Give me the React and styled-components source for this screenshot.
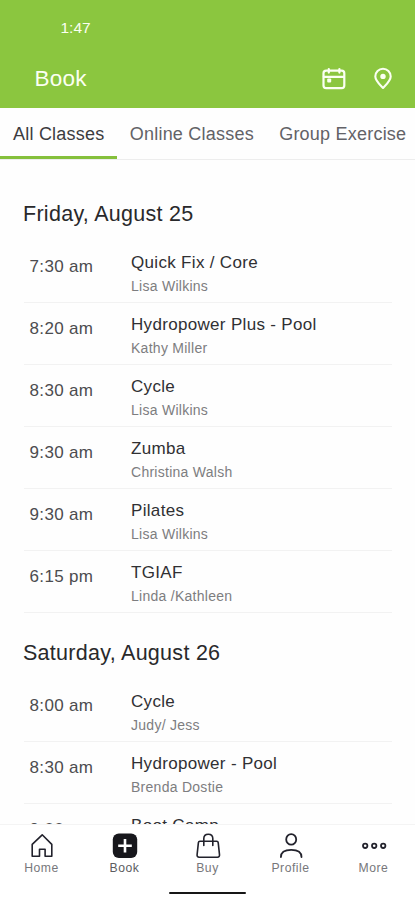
import React from 'react';
import styled, { createGlobalStyle } from 'styled-components';

const days = [
	{
		date: 'Friday, August 25',
		classes: [
			{ time: '7:30 am', title: 'Quick Fix / Core', coach: 'Lisa Wilkins' },
			{ time: '8:20 am', title: 'Hydropower Plus - Pool', coach: 'Kathy Miller' },
			{ time: '8:30 am', title: 'Cycle', coach: 'Lisa Wilkins' },
			{ time: '9:30 am', title: 'Zumba', coach: 'Christina Walsh' },
			{ time: '9:30 am', title: 'Pilates', coach: 'Lisa Wilkins' },
			{ time: '6:15 pm', title: 'TGIAF', coach: 'Linda /Kathleen' },
		],
	},
	{
		date: 'Saturday, August 26',
		classes: [
			{ time: '8:00 am', title: 'Cycle', coach: 'Judy/ Jess' },
			{ time: '8:30 am', title: 'Hydropower - Pool', coach: 'Brenda Dostie' },
			{ time: '9:00 am', title: 'Boot Camp', coach: '' },
		],
	},
];

const tabs = ['All Classes', 'Online Classes', 'Group Exercise'];

const CalendarIcon = () => (
	<svg width="24" height="24" viewBox="0 0 24 24" fill="none" stroke="currentColor" strokeWidth="2.2" strokeLinecap="round">
		<rect x="1.5" y="3.6" width="20.8" height="17.6" rx="2.6" />
		<path d="M1.8 9.8H22M6.8 2V5.6M17.4 2V5.6" />
		<rect x="5.2" y="11.6" width="4" height="4" rx="1" fill="currentColor" stroke="none" />
	</svg>
);

const PinIcon = () => (
	<svg width="20" height="24" viewBox="0 0 20 24" fill="none" stroke="currentColor" strokeWidth="2.1" strokeLinejoin="round">
		<path d="M10 21C7.4 18.2 2.3 13.6 2.3 9.4a7.7 7.7 0 0 1 15.4 0c0 4.2-5.1 8.800-7.700 11.600Z" />
		<circle cx="10" cy="9.4" r="2.7" fill="currentColor" stroke="none" />
	</svg>
);

const HomeIcon = () => (
	<svg width="28" height="28" viewBox="0 0 28 28" fill="none" stroke="currentColor" strokeWidth="1.6" strokeLinejoin="round">
		<path d="M4.2 12.4 14.2 2.8l9.6 9.6v11.8h-6.7v-7h-5.6v7H4.2Z" />
	</svg>
);

const BookIcon = () => (
	<svg width="28" height="28" viewBox="0 0 28 28">
		<rect x="1.8" y="1.6" width="24.4" height="24.4" rx="6" fill="#17171c" />
		<path d="M14 7V20.600M7.200 13.800h13.600" stroke="#fff" strokeWidth="2.6" />
	</svg>
);

const BagIcon = () => (
	<svg width="28" height="28" viewBox="0 0 28 28" fill="none" stroke="currentColor" strokeWidth="1.6" strokeLinecap="round" strokeLinejoin="round">
		<path d="M5.9 9.2h16.800c.9 0 1.400.5 1.500 1.400l1.300 12c.2 1.600-.6 2.600-2 2.600h-18.400c-1.400 0-2.200-1-2-2.600l1.300-12c.1-.9.6-1.400 1.500-1.400Z" />
		<path d="M9.8 13.4V6.600c0-2.600 1.800-4.400 4.500-4.400s4.500 1.800 4.500 4.400v6.800" />
	</svg>
);

const ProfileIcon = () => (
	<svg width="28" height="28" viewBox="0 0 28 28" fill="none" stroke="currentColor" strokeWidth="1.8" strokeLinecap="round">
		<ellipse cx="14.2" cy="7.4" rx="5" ry="5.3" />
		<path d="M3.9 25c0-4.400 3.600-7.200 10.300-7.200s10.300 2.800 10.300 7.200" />
	</svg>
);

const MoreIcon = () => (
	<svg width="28" height="28" viewBox="0 0 28 28" fill="none" stroke="currentColor" strokeWidth="1.8">
		<circle cx="5.200" cy="13.800" r="2.200" />
		<circle cx="14.200" cy="13.800" r="2.200" />
		<circle cx="23.200" cy="13.800" r="2.200" />
	</svg>
);

const navItems = [
	{ label: 'Home', icon: HomeIcon },
	{ label: 'Book', icon: BookIcon },
	{ label: 'Buy', icon: BagIcon },
	{ label: 'Profile', icon: ProfileIcon },
	{ label: 'More', icon: MoreIcon },
];

const App = () => {
	return (
		<Screen>
			<GlobalStyle />
			<Header>
				<Clock>1:47</Clock>
				<TitleBar>
					<PageTitle>Book</PageTitle>
					<Actions>
						<CalendarIcon />
						<PinIcon />
					</Actions>
				</TitleBar>
			</Header>
			<Tabs>
				{tabs.map((tab, index) => (
					<Tab key={tab} $active={index === 0}>
						{tab}
					</Tab>
				))}
			</Tabs>
			<Schedule>
				{days.map((day) => (
					<Day key={day.date}>
						<DayTitle>{day.date}</DayTitle>
						{day.classes.map((item, index) => (
							<ClassRow key={index}>
								<ClassTime>{item.time}</ClassTime>
								<ClassInfo>
									<ClassTitle>{item.title}</ClassTitle>
									<Coach>{item.coach}</Coach>
								</ClassInfo>
							</ClassRow>
						))}
					</Day>
				))}
			</Schedule>
			<BottomNav>
				<NavList>
					{navItems.map(({ label, icon: Icon }) => (
						<NavItem key={label}>
							<Icon />
							<NavLabel $active={label === 'Book'}>{label}</NavLabel>
						</NavItem>
					))}
				</NavList>
				<HomeIndicator />
			</BottomNav>
		</Screen>
	);
};

export default App;

const GlobalStyle = createGlobalStyle`
	* {
		box-sizing: border-box;
	}

	body {
		margin: 0;
		overflow: hidden;
		background-color: #fefefe;
		font-family: 'Liberation Sans', Arial, sans-serif;
	}
`;

const Screen = styled.div`
	display: flex;
	flex-direction: column;
	width: 100%;
	height: 900px;
	overflow: hidden;
`;

const Header = styled.header`
	flex: none;
	height: 108px;
	padding-top: 18px;
	background-color: #8bc63f;
	color: #fbfff2;
`;

const Clock = styled.div`
	padding-left: 60.5px;
	font-size: 15.5px;
	line-height: 20px;
`;

const TitleBar = styled.div`
	display: flex;
	align-items: center;
	justify-content: space-between;
	height: 40px;
	margin-top: 21px;
	padding: 0 22px 0 34.5px;
`;

const PageTitle = styled.h1`
	margin: 0;
	font-size: 22.5px;
	font-weight: 400;
	letter-spacing: 0.2px;
	line-height: 30px;
`;

const Actions = styled.div`
	display: flex;
	align-items: center;
	gap: 27px;
`;

const Tabs = styled.nav`
	display: flex;
	flex: none;
	height: 52px;
	border-bottom: 1px solid #ededed;
`;

const Tab = styled.div`
	flex: none;
	height: 51px;
	padding: 1px 12.3px 0 13px;
	border-bottom: 3px solid ${({ $active }) => ($active ? '#85c03c' : 'transparent')};
	color: ${({ $active }) => ($active ? '#3c3c40' : '#626267')};
	font-size: 18px;
	letter-spacing: 0.22px;
	line-height: 50px;
	white-space: nowrap;
`;

const Schedule = styled.main`
	flex: 1;
	min-height: 0;
	padding: 14px 23px 0;
	overflow: hidden;
`;

const Day = styled.section`
	width: 100%;
`;

const DayTitle = styled.h2`
	height: 67px;
	margin: 0;
	padding-top: 25px;
	color: #29292b;
	font-size: 21.5px;
	font-weight: 400;
	letter-spacing: 0.28px;
	line-height: 30px;
`;

const ClassRow = styled.div`
	display: flex;
	height: 62px;
	margin-left: 1px;
	border-bottom: 1px solid #f2f2f2;
`;

const ClassTime = styled.div`
	width: 107px;
	padding: 16px 0 0 5.5px;
	color: #4c4c4f;
	font-size: 17px;
	letter-spacing: 0.35px;
	line-height: 20px;
`;

const ClassInfo = styled.div`
	padding-top: 12px;
`;

const ClassTitle = styled.div`
	color: #303033;
	font-size: 17px;
	letter-spacing: 0.32px;
	line-height: 20px;
`;

const Coach = styled.div`
	margin-top: 4px;
	color: #7d7d80;
	font-size: 14px;
	letter-spacing: 0.27px;
	line-height: 18px;
`;

const BottomNav = styled.footer`
	flex: none;
	height: 76px;
	border-top: 1px solid #f4f4f4;
	background-color: #fff;
`;

const NavList = styled.div`
	display: flex;
	padding-top: 7px;
`;

const NavItem = styled.div`
	display: flex;
	flex: 1;
	flex-direction: column;
	align-items: center;
	color: #22222c;
`;

const NavLabel = styled.span`
	color: ${({ $active }) => ($active ? '#5c5c60' : '#77777b')};
	font-size: 12.2px;
	letter-spacing: 0.5px;
	line-height: 16px;
`;

const HomeIndicator = styled.div`
	width: 77px;
	height: 2px;
	margin: 16px auto 0;
	border-radius: 1px;
	background-color: #161616;
`;
